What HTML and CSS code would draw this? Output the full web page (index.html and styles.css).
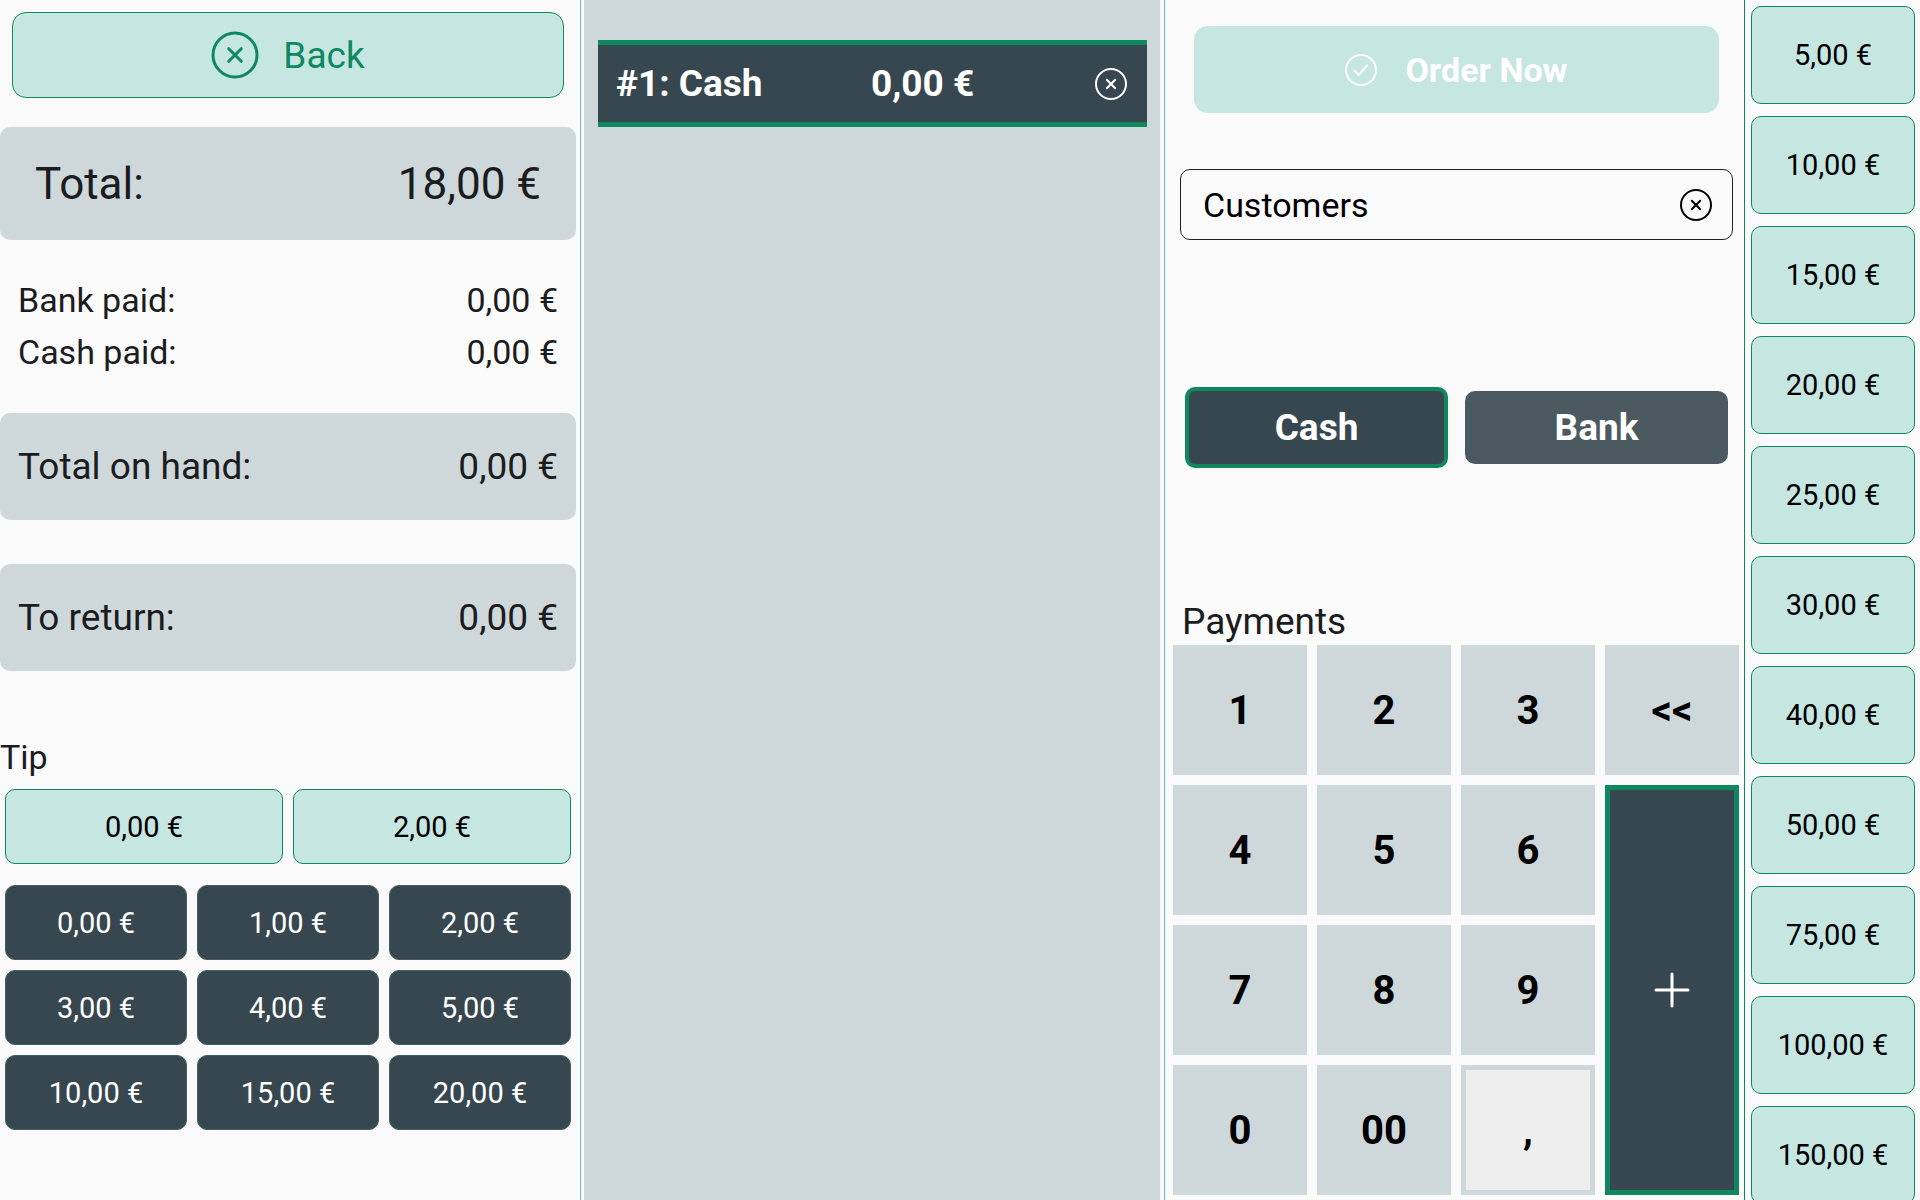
FILE: index.html
```html
<!DOCTYPE html>
<html lang="en">
<head>
    <meta charset="UTF-8">
    <meta name="viewport" content="width=device-width, initial-scale=1.0">
    <title>Checkout</title>
    <link rel="stylesheet" href="styles.css">
</head>
<body>
    <main class="checkout">
        <!-- Totals and tip -->
        <section class="summary">
            <button type="button" class="back">
                <svg class="icon-large" viewBox="0 0 48 48" aria-hidden="true">
                    <circle cx="24" cy="24" r="22"/>
                    <path d="M17.700 17.700l12.600 12.600M30.300 17.700l-12.600 12.600"/>
                </svg>
                Back
            </button>

            <div class="total card">
                <span>Total:</span>
                <span>18,00 €</span>
            </div>

            <div class="paid">
                <div class="paid-row"><span>Bank paid:</span><span>0,00 €</span></div>
                <div class="paid-row"><span>Cash paid:</span><span>0,00 €</span></div>
            </div>

            <div class="card"><span>Total on hand:</span><span>0,00 €</span></div>
            <div class="card"><span>To return:</span><span>0,00 €</span></div>

            <h2 class="tip-title">Tip</h2>
            <div class="tip-suggested">
                <button type="button" class="amount">0,00 €</button>
                <button type="button" class="amount">2,00 €</button>
            </div>
            <div class="tip-grid">
                <button type="button" class="amount dark">0,00 €</button>
                <button type="button" class="amount dark">1,00 €</button>
                <button type="button" class="amount dark">2,00 €</button>
                <button type="button" class="amount dark">3,00 €</button>
                <button type="button" class="amount dark">4,00 €</button>
                <button type="button" class="amount dark">5,00 €</button>
                <button type="button" class="amount dark">10,00 €</button>
                <button type="button" class="amount dark">15,00 €</button>
                <button type="button" class="amount dark">20,00 €</button>
            </div>
        </section>

        <div class="divider"></div>

        <!-- Payments already added -->
        <section class="payments">
            <div class="payment selected">
                <span>#1: Cash</span>
                <span class="payment-amount">0,00 €</span>
                <button type="button" class="icon-button" aria-label="Remove payment">
                    <svg class="icon" viewBox="0 0 32 32" aria-hidden="true">
                        <circle cx="16" cy="16" r="15"/>
                        <path d="M11.800 11.800l8.400 8.400M20.200 11.800l-8.400 8.400"/>
                    </svg>
                </button>
            </div>
        </section>

        <div class="divider"></div>

        <!-- Order, customer and keypad -->
        <section class="entry">
            <button type="button" class="order" disabled>
                <svg class="icon" viewBox="0 0 32 32" aria-hidden="true">
                    <circle cx="16" cy="16" r="15"/>
                    <path d="M9.500 16.800l4.400 4.200L22 11.400"/>
                </svg>
                Order Now
            </button>

            <div class="customer">
                <input type="text" class="customer-input" placeholder="Customers" aria-label="Customers">
                <button type="button" class="icon-button" aria-label="Clear customer">
                    <svg class="icon" viewBox="0 0 32 32" aria-hidden="true">
                        <circle cx="16" cy="16" r="15"/>
                        <path d="M11.800 11.800l8.400 8.400M20.200 11.800l-8.400 8.400"/>
                    </svg>
                </button>
            </div>

            <div class="methods">
                <button type="button" class="method active">Cash</button>
                <button type="button" class="method">Bank</button>
            </div>

            <h2 class="keypad-title">Payments</h2>
            <div class="keypad">
                <button type="button" class="key">1</button>
                <button type="button" class="key">2</button>
                <button type="button" class="key">3</button>
                <button type="button" class="key">&lt;&lt;</button>
                <button type="button" class="key">4</button>
                <button type="button" class="key">5</button>
                <button type="button" class="key">6</button>
                <button type="button" class="key key-add" aria-label="Add payment">
                    <svg class="icon-plus" viewBox="0 0 36 36" aria-hidden="true">
                        <path d="M18 2v32M2 18h32"/>
                    </svg>
                </button>
                <button type="button" class="key">7</button>
                <button type="button" class="key">8</button>
                <button type="button" class="key">9</button>
                <button type="button" class="key">0</button>
                <button type="button" class="key">00</button>
                <button type="button" class="key key-comma">,</button>
            </div>
        </section>

        <!-- Quick amounts -->
        <aside class="quick">
            <button type="button" class="amount">5,00 €</button>
            <button type="button" class="amount">10,00 €</button>
            <button type="button" class="amount">15,00 €</button>
            <button type="button" class="amount">20,00 €</button>
            <button type="button" class="amount">25,00 €</button>
            <button type="button" class="amount">30,00 €</button>
            <button type="button" class="amount">40,00 €</button>
            <button type="button" class="amount">50,00 €</button>
            <button type="button" class="amount">75,00 €</button>
            <button type="button" class="amount">100,00 €</button>
            <button type="button" class="amount">150,00 €</button>
        </aside>
    </main>
</body>
</html>
```

FILE: styles.css
```css
* {
    box-sizing: border-box;
}
body {
    margin: 0;
    font-family: Roboto, sans-serif;
    background-color: #fafafa;
    color: #1b1c1e;
}
button, input {
    margin: 0;
    padding: 0;
    font-family: inherit;
    color: inherit;
}
button {
    cursor: pointer;
}
h2 {
    margin: 0;
    font-weight: 400;
}
svg {
    fill: none;
    stroke: currentColor;
    stroke-width: 2;
    stroke-linecap: round;
    stroke-linejoin: round;
}
.checkout {
    display: grid;
    grid-template-columns: 1fr 8px 1fr 8px 1fr 176px;
    height: 100vh;
    overflow: hidden;
}
.divider {
    width: 1px;
    margin-left: 4px;
    background-color: #6dbcaf;
}
.icon {
    display: block;
    width: 32px;
    height: 32px;
}
.icon-large {
    width: 48px;
    height: 48px;
    stroke-width: 3;
}
.icon-plus {
    width: 36px;
    height: 36px;
    stroke-width: 3;
}
.icon-button {
    border: none;
    background: none;
}

/* Left column */
.back {
    display: flex;
    align-items: center;
    justify-content: center;
    gap: 24px;
    width: calc(100% - 24px);
    height: 86px;
    margin: 12px 12px 29px;
    border: 1px solid #0f885f;
    border-radius: 14px;
    background-color: #c6e6e2;
    color: #0f885f;
    font-size: 37px;
}
.card {
    display: flex;
    align-items: center;
    justify-content: space-between;
    height: 107px;
    margin-bottom: 44px;
    padding: 0 18px;
    border-radius: 10px;
    background-color: #ced7d9;
    font-size: 37px;
}
.card.total {
    height: 113px;
    padding: 0 35px;
    margin-bottom: 34px;
    font-size: 44px;
}
.paid {
    margin-bottom: 35px;
    padding: 0 18px;
    font-size: 34px;
}
.paid-row {
    display: flex;
    justify-content: space-between;
    line-height: 52px;
}
.tip-title {
    margin-top: 66px;
    font-size: 34px;
    line-height: 40px;
}
.tip-suggested, .tip-grid {
    display: grid;
    gap: 10px;
    padding: 0 5px;
}
.tip-suggested {
    grid-template-columns: repeat(2, 1fr);
    margin: 12px 0 21px;
}
.tip-grid {
    grid-template-columns: repeat(3, 1fr);
}
.amount {
    height: 75px;
    border: 1px solid #0f885f;
    border-radius: 10px;
    background-color: #c6e6e2;
    color: #000;
    font-size: 29px;
}
.amount.dark {
    border-color: #3f625f;
    background-color: #37474f;
    color: #fff;
}

/* Middle column */
.payments {
    padding: 40px 13px 0 14px;
    background-color: #ced7d9;
}
.payment {
    display: grid;
    grid-template-columns: 2fr 2fr 1fr;
    align-items: center;
    height: 87px;
    padding: 0 20px 0 18px;
    background-color: #37474f;
    color: #fff;
    font-size: 37px;
    font-weight: 700;
}
.payment.selected {
    border-top: 5px solid #0f885f;
    border-bottom: 5px solid #0f885f;
}
.payment-amount {
    text-align: center;
}
.payment .icon-button {
    justify-self: end;
}

/* Right column */
.entry {
    display: flex;
    flex-direction: column;
}
.order {
    display: flex;
    align-items: center;
    justify-content: center;
    gap: 28px;
    height: 87px;
    margin: 26px 25px 56px 26px;
    border: none;
    border-radius: 14px;
    background-color: #c6e6e2;
    color: #fff;
    font-size: 34px;
    font-weight: 700;
}
.customer {
    display: flex;
    align-items: center;
    height: 71px;
    margin: 0 11px 0 12px;
    padding: 0 20px 0 22px;
    border: 1px solid #222;
    border-radius: 10px;
    color: #000;
}
.customer-input {
    flex: 1;
    min-width: 0;
    border: none;
    outline: none;
    background: none;
    font-size: 34px;
}
.customer-input::placeholder {
    color: #000;
    opacity: 1;
}
.methods {
    display: grid;
    grid-template-columns: 1fr 1fr;
    align-items: center;
    gap: 17px;
    margin: 147px 16px 0 17px;
}
.method {
    height: 73px;
    border: none;
    border-radius: 10px;
    background-color: #4b5a61;
    color: #fff;
    font-size: 37px;
    font-weight: 700;
}
.method.active {
    height: 81px;
    border: 4px solid #0f885f;
    background-color: #37474f;
}
.keypad-title {
    margin: auto 0 0 14px;
    font-size: 37px;
    line-height: 36px;
}
.keypad {
    display: grid;
    grid-template-columns: repeat(4, 1fr);
    grid-auto-rows: 130px;
    gap: 10px;
    padding: 5px;
}
.key {
    border: none;
    background-color: #ced7d9;
    color: #000;
    font-size: 40px;
    font-weight: 700;
}
.key-add {
    display: flex;
    grid-column: 4;
    grid-row: 2 / span 3;
    align-items: center;
    justify-content: center;
    border: 5px solid #0f885f;
    background-color: #37474f;
    color: #fff;
}
.key-comma {
    border: 5px solid #ced7d9;
    background-color: #eee;
}

/* Quick amounts */
.quick {
    display: flex;
    flex-direction: column;
    gap: 12px;
    padding: 6px 5px 0 6px;
    border-left: 1px solid #0f885f;
    overflow: hidden;
}
.quick .amount {
    flex: none;
    height: 98px;
}
```
